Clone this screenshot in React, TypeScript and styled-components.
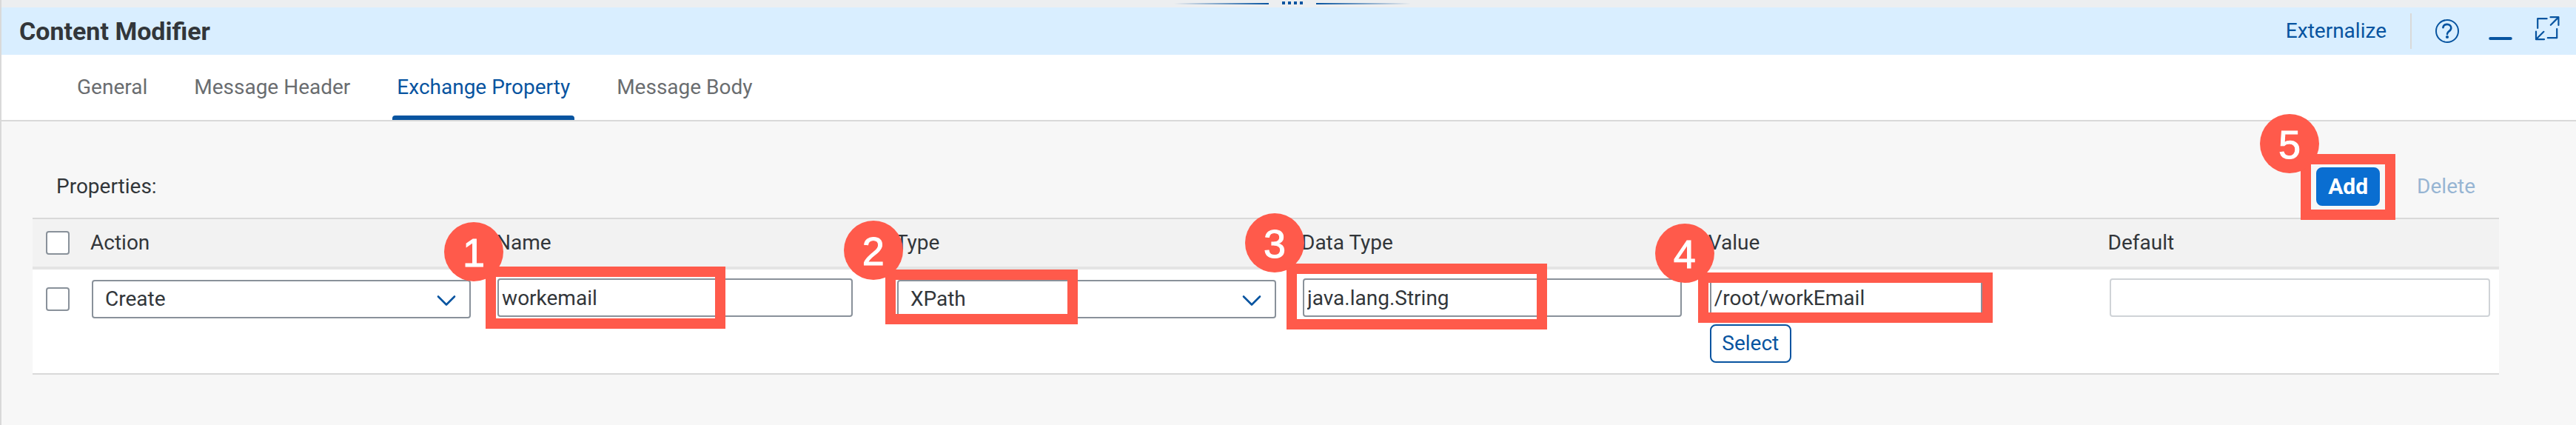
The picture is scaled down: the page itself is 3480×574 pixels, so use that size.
import React, { useState } from "react";
import styled, { createGlobalStyle, css } from "styled-components";

const color = {
  text: "#32363a",
  muted: "#6a6d70",
  link: "#0854a0",
  action: "#0a6ed1",
  border: "#89919a",
  line: "#d9d9d9",
  callout: "#ff5a4b",
};

const GlobalStyle = createGlobalStyle`
  * { box-sizing: border-box; }
  html, body { margin: 0; min-height: 100%; background: #f7f7f7; }
  body, button, input, select {
    font-family: Roboto, "Liberation Sans", sans-serif;
    font-size: 28px;
    line-height: 36px;
    color: ${color.text};
  }
  #root { min-height: 100vh; display: flex; }
`;

const Panel = styled.main`
  flex: 1;
  min-width: 0;
  border-left: 2px solid ${color.line};
`;

const Splitter = styled.div`
  height: 10px;
  padding: 2px 0 4px 10px;
  background: #eceef0;
  display: flex;
  justify-content: center;
  align-items: flex-end;
  gap: 18px;
`;

const SplitterLine = styled.span<{ $to: "left" | "right" }>`
  width: 128px;
  height: 2px;
  background: linear-gradient(to ${(p) => p.$to}, ${color.link}, transparent);
`;

const SplitterGrip = styled.span`
  display: flex;
  gap: 4px;
`;

const GripDot = styled.i`
  width: 4px;
  height: 4px;
  background: ${color.link};
`;

const Header = styled.header`
  height: 64px;
  padding: 0 22px 0 24px;
  background: #d9eeff;
  display: flex;
  align-items: center;
  justify-content: space-between;
`;

const Title = styled.h1`
  margin: 0;
  font-size: 34px;
  line-height: 40px;
  font-weight: 700;
`;

const HeaderActions = styled.div`
  display: flex;
  align-items: center;
`;

const PlainButton = styled.button`
  padding: 0;
  border: 0;
  background: none;
  color: ${color.link};
`;

const IconButton = styled(PlainButton)<{ $width: number }>`
  width: ${(p) => p.$width}px;
  display: flex;
  align-items: center;
  justify-content: center;
`;

const Separator = styled.span`
  width: 2px;
  height: 48px;
  margin: 0 22px 0 32px;
  background: ${color.line};
`;

const IconGroup = styled.div`
  display: flex;
  gap: 20px;
`;

const Tabs = styled.nav`
  height: 90px;
  padding-left: 96px;
  background: #fff;
  border-bottom: 2px solid ${color.line};
  display: flex;
  gap: 51px;
`;

const Tab = styled.button<{ $active: boolean }>`
  padding: 0 6px;
  border: 0;
  background: none;
  color: ${(p) => (p.$active ? color.link : color.muted)};
  display: flex;
  flex-direction: column;
  align-items: stretch;
  justify-content: space-between;

  &::before,
  &::after {
    content: "";
    height: 6px;
    margin: 0 -6px;
    border-radius: 4px 4px 0 0;
  }
  &::after {
    background: ${(p) => (p.$active ? color.link : "transparent")};
  }
`;

const Content = styled.section`
  padding: 62px 104px 60px 42px;
`;

const Toolbar = styled.div`
  padding: 0 16px 16px 32px;
  display: flex;
  align-items: center;
`;

const ToolbarTitle = styled.h2`
  margin: 0 auto 0 0;
  font-size: 28px;
  line-height: 36px;
  font-weight: 400;
`;

const ToolbarButtons = styled.div`
  display: flex;
  gap: 34px;
`;

const Button = styled.button<{ $kind: "primary" | "outline" | "ghost" }>`
  height: 52px;
  padding: 0 14px;
  border: 2px solid transparent;
  border-radius: 8px;
  background: none;
  color: ${color.link};

  ${(p) =>
    p.$kind === "primary" &&
    css`
      width: 86px;
      background: ${color.action};
      border-color: ${color.action};
      color: #fff;
      font-size: 30px;
      font-weight: 700;
    `}
  ${(p) =>
    p.$kind === "outline" &&
    css`
      width: 110px;
      background: #fff;
      border-color: ${color.link};
    `}
  &:disabled {
    opacity: 0.4;
  }
`;

const Table = styled.table`
  width: 100%;
  table-layout: fixed;
  border-collapse: separate;
  border-spacing: 0;
  border-top: 2px solid ${color.line};
  border-bottom: 2px solid ${color.line};
`;

const Col = styled.col<{ $width: string }>`
  width: ${(p) => p.$width};
`;

const HeadCell = styled.th`
  height: 68px;
  padding: 0 10px;
  background: #f2f2f2;
  border-bottom: 4px solid #e4e4e4;
  text-align: left;
  font-weight: 400;
`;

const CheckHeadCell = styled(HeadCell)`
  padding: 0 18px;
`;

const Cell = styled.td<{ $top?: number }>`
  padding: ${(p) => p.$top ?? 12}px 12px 14px;
  background: #fff;
  vertical-align: top;
`;

const CheckCell = styled(Cell)`
  padding: 24px 18px;
`;

const Checkbox = styled.input`
  appearance: none;
  display: block;
  width: 32px;
  height: 32px;
  margin: 0;
  border: 2px solid ${color.border};
  border-radius: 4px;
  background: #fff;
`;

const Field = styled.div<{ $max: number }>`
  position: relative;
  max-width: ${(p) => p.$max}px;
`;

const fieldBox = css`
  display: block;
  width: 100%;
  height: 52px;
  border: 2px solid ${color.border};
  border-radius: 4px;
  background: #fff;
  color: ${color.text};
`;

const TextInput = styled.input`
  ${fieldBox}
  padding: 0 4px;
  &:disabled {
    border-color: #cfd3d7;
  }
`;

const SelectInput = styled.select`
  ${fieldBox}
  appearance: none;
  padding: 0 60px 0 16px;
`;

const Chevron = styled.svg`
  position: absolute;
  right: 20px;
  top: 20px;
  width: 26px;
  height: 16px;
  pointer-events: none;
`;

const ValueStack = styled.div`
  display: flex;
  flex-direction: column;
  gap: 10px;
`;

const Anchor = styled.div`
  position: relative;
`;

const Frame = styled.span<{ $x: number; $y: number; $w: number; $h: number }>`
  position: absolute;
  left: ${(p) => p.$x}px;
  top: ${(p) => p.$y}px;
  width: ${(p) => p.$w}px;
  height: ${(p) => p.$h}px;
  border: 14px solid ${color.callout};
  pointer-events: none;
`;

const Badge = styled.span<{ $x: number; $y: number }>`
  position: absolute;
  left: ${(p) => p.$x}px;
  top: ${(p) => p.$y}px;
  width: 80px;
  height: 80px;
  border-radius: 50%;
  background: ${color.callout};
  color: #fff;
  font: 400 54px/82px "Liberation Sans", Arial, sans-serif;
  -webkit-text-stroke: 1px #fff;
  text-align: center;
  pointer-events: none;
`;

type CalloutProps = {
  n: number;
  frame: [x: number, y: number, w: number, h: number];
  badge: [x: number, y: number];
};

function Callout({ n, frame: [x, y, w, h], badge: [bx, by] }: CalloutProps) {
  return (
    <>
      <Frame $x={x} $y={y} $w={w} $h={h} />
      <Badge $x={bx} $y={by}>{n}</Badge>
    </>
  );
}

function Dropdown({ label, options }: { label: string; options: string[] }) {
  return (
    <>
      <SelectInput aria-label={label} defaultValue={options[0]}>
        {options.map((o) => (
          <option key={o}>{o}</option>
        ))}
      </SelectInput>
      <Chevron viewBox="0 0 26 16" fill="none" stroke={color.link} strokeWidth="2.6" strokeLinecap="round" strokeLinejoin="round" aria-hidden>
        <path d="M2 2.5 13 13.5 24 2.5" />
      </Chevron>
    </>
  );
}

const HelpIcon = () => (
  <svg width="34" height="34" viewBox="0 0 34 34" fill="none" stroke={color.link} strokeLinecap="round" aria-hidden>
    <circle cx="17" cy="17" r="15" strokeWidth="2" />
    <path d="M11.4 12.2c.4-2.7 2.5-4.3 5.4-4.3 3.2 0 5.5 1.9 5.5 4.8 0 2.3-1.3 3.5-3 4.7-1.6 1.1-2.3 1.9-2.3 3.7" strokeWidth="2.6" />
    <circle cx="17" cy="25" r="2.1" fill={color.link} stroke="none" />
  </svg>
);

const MinimizeIcon = () => (
  <svg width="34" height="34" viewBox="0 0 34 34" fill="none" stroke={color.link} strokeLinecap="round" aria-hidden>
    <path d="M3.2 27H30.8" strokeWidth="4" />
  </svg>
);

const ExpandIcon = () => (
  <svg width="34" height="44" viewBox="0 0 34 44" fill="none" stroke={color.link} strokeWidth="2.2" strokeLinecap="round" strokeLinejoin="round" aria-hidden>
    <path d="M4.2 18V5.2H16.6" />
    <path d="M21.5 3.200H32.4V14" />
    <path d="M21.8 13.8 32 3.6" />
    <path d="M30.2 19V31.2H17.8" />
    <path d="M2 22.5V33.2H13" />
    <path d="M2.4 32.8 12.4 22.8" />
  </svg>
);

const TABS = ["General", "Message Header", "Exchange Property", "Message Body"];
const COLUMNS = ["Action", "Name", "Type", "Data Type", "Value", "Default"];
const WIDTHS = ["68px", "16.45%", "16.2%", "16.45%", "16.5%", "16.2%", "auto"];

export default function App() {
  const [tab, setTab] = useState("Exchange Property");

  return (
    <>
      <GlobalStyle />
      <Panel>
        <Splitter>
          <SplitterLine $to="left" />
          <SplitterGrip>
            <GripDot />
            <GripDot />
            <GripDot />
            <GripDot />
          </SplitterGrip>
          <SplitterLine $to="right" />
        </Splitter>

        <Header>
          <Title>Content Modifier</Title>
          <HeaderActions>
            <PlainButton>Externalize</PlainButton>
            <Separator />
            <IconGroup>
              <IconButton $width={52} aria-label="Help"><HelpIcon /></IconButton>
              <IconButton $width={52} aria-label="Minimize"><MinimizeIcon /></IconButton>
              <IconButton $width={34} aria-label="Maximize"><ExpandIcon /></IconButton>
            </IconGroup>
          </HeaderActions>
        </Header>

        <Tabs>
          {TABS.map((t) => (
            <Tab key={t} $active={t === tab} onClick={() => setTab(t)}>
              {t}
            </Tab>
          ))}
        </Tabs>

        <Content>
          <Toolbar>
            <ToolbarTitle>Properties:</ToolbarTitle>
            <ToolbarButtons>
              <Anchor>
                <Button $kind="primary">Add</Button>
                <Callout n={5} frame={[-21, -18, 128, 89]} badge={[-76, -72]} />
              </Anchor>
              <Button $kind="ghost" disabled>Delete</Button>
            </ToolbarButtons>
          </Toolbar>

          <Table>
            <colgroup>
              {WIDTHS.map((w, i) => (
                <Col key={i} $width={w} />
              ))}
            </colgroup>
            <thead>
              <tr>
                <CheckHeadCell>
                  <Checkbox type="checkbox" aria-label="Select all" />
                </CheckHeadCell>
                {COLUMNS.map((c) => (
                  <HeadCell key={c} scope="col">{c}</HeadCell>
                ))}
              </tr>
            </thead>
            <tbody>
              <tr>
                <CheckCell>
                  <Checkbox type="checkbox" aria-label="Select row" />
                </CheckCell>
                <Cell $top={14}>
                  <Field $max={512}>
                    <Dropdown label="Action" options={["Create", "Delete"]} />
                  </Field>
                </Cell>
                <Cell>
                  <Field $max={480}>
                    <TextInput aria-label="Name" defaultValue="workemail" />
                    <Callout n={1} frame={[-16, -16, 324, 84]} badge={[-72, -76]} />
                  </Field>
                </Cell>
                <Cell $top={14}>
                  <Field $max={512}>
                    <Dropdown label="Type" options={["XPath", "Constant", "Header"]} />
                    <Callout n={2} frame={[-16, -14, 260, 74]} badge={[-72, -80]} />
                  </Field>
                </Cell>
                <Cell>
                  <Field $max={512}>
                    <TextInput aria-label="Data Type" defaultValue="java.lang.String" />
                    <Callout n={3} frame={[-22, -20, 352, 89]} badge={[-78, -88]} />
                  </Field>
                </Cell>
                <Cell>
                  <ValueStack>
                    <Field $max={368}>
                      <TextInput aria-label="Value" defaultValue="/root/workEmail" />
                      <Callout n={4} frame={[-16, -8, 398, 68]} badge={[-74, -74]} />
                    </Field>
                    <Button $kind="outline">Select</Button>
                  </ValueStack>
                </Cell>
                <Cell>
                  <Field $max={514}>
                    <TextInput aria-label="Default" disabled />
                  </Field>
                </Cell>
              </tr>
            </tbody>
          </Table>
        </Content>
      </Panel>
    </>
  );
}
